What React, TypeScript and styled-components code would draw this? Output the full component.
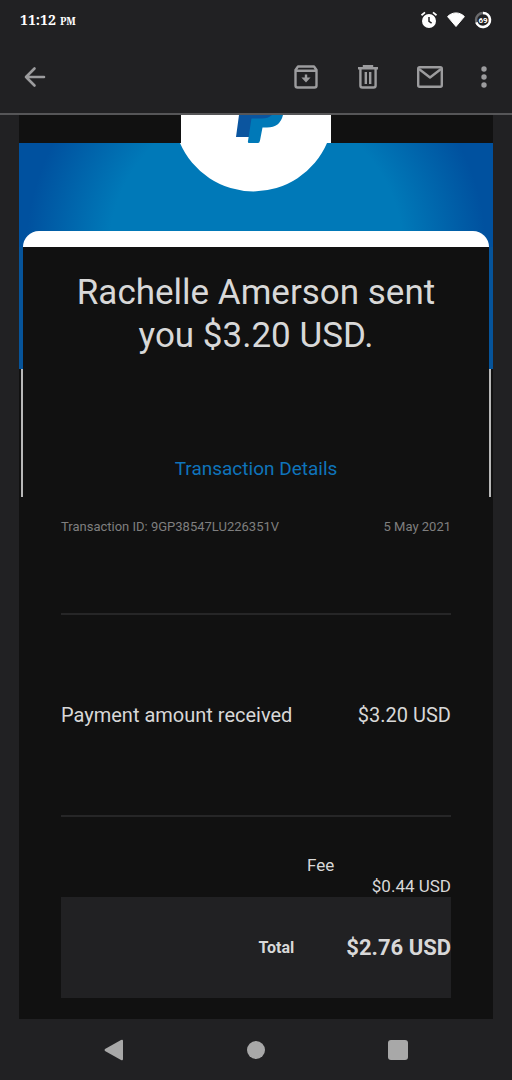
import React from "react";
import styled, { createGlobalStyle, css } from "styled-components";

const GlobalStyle = createGlobalStyle`
  *, *::before, *::after { box-sizing: border-box; }
  body {
    margin: 0;
    background: #212123;
    color: #d8d8d8;
    font-family: Roboto, "Liberation Sans", sans-serif;
  }
`;

const Screen = styled.div`
  display: flex;
  flex-direction: column;
  min-height: 100vh;
`;

const StatusBar = styled.div`
  display: flex;
  align-items: center;
  justify-content: space-between;
  height: 40px;
  padding: 0 20px;
  color: #fff;
`;

const Clock = styled.time`
  display: flex;
  align-items: baseline;
  gap: 4px;
  font: bold 14px/20px "Noto Serif", "Liberation Serif", serif;
`;

const Meridiem = styled.span`
  font-size: 10px;
`;

const StatusIcons = styled.div`
  display: flex;
  align-items: center;
  gap: 9px;
`;

const Toolbar = styled.header`
  display: flex;
  align-items: center;
  justify-content: space-between;
  height: 75px;
  padding: 0 20px 0 19px;
  border-bottom: 2px solid #565658;
`;

const ToolbarGroup = styled.div`
  display: flex;
  align-items: center;
  gap: 30px;
`;

const IconButton = styled.button<{ $narrow?: boolean }>`
  display: flex;
  align-items: center;
  justify-content: center;
  width: ${(p) => (p.$narrow ? "16px" : "32px")};
  height: 32px;
  padding: 0;
  border: 0;
  background: none;
  color: #9c9c9e;
  cursor: pointer;
`;

const Mail = styled.main`
  flex: 1;
  margin: 0 19px;
  background: #111;
`;

const Hero = styled.div`
  display: flex;
  flex-direction: column;
  align-items: center;
  justify-content: space-between;
  height: 132px;
  padding: 0 4px;
  background:
    linear-gradient(#111, #111) top / 100% 28px no-repeat,
    radial-gradient(circle farthest-side at 50% 136px, #0079b8 62%, #00519f 97%);
`;

const CardCap = styled.div`
  align-self: stretch;
  height: 16px;
  border-radius: 16px 16px 0 0;
  background: #fff;
`;

const Edged = styled.div<{ $edge: "blue" | "white" }>`
  ${(p) =>
    p.$edge === "blue"
      ? css`
          min-height: 122px;
          border: solid #06549a;
          border-width: 0 4px;
        `
      : css`
          min-height: 128px;
          margin: 0 2px;
          border: solid #b8b8b8;
          border-width: 0 2px;
        `}
`;

const Headline = styled.h1`
  max-width: 400px;
  margin: 0 auto;
  padding-top: 24px;
  font-size: 35px;
  line-height: 43px;
  font-weight: 400;
  text-align: center;
`;

const SectionTitle = styled.h2`
  margin: 0;
  padding-top: 89px;
  color: #0f74bb;
  font-size: 19px;
  line-height: 22px;
  font-weight: 400;
  text-align: center;
`;

const Details = styled.div`
  padding: 20px 42px;
`;

const MetaRow = styled.div`
  display: flex;
  justify-content: space-between;
  padding-bottom: 76px;
  color: #7f7f7f;
  font-size: 13px;
  line-height: 20px;
`;

const Amounts = styled.table`
  width: 100%;
  border-collapse: collapse;
`;

const PaymentRow = styled.tr`
  height: 202px;
  border: solid #262627;
  border-width: 2px 0;
  font-size: 20px;
  line-height: 24px;
`;

const FeeRow = styled.tr`
  height: 81px;
  font-size: 17px;
  line-height: 21px;
`;

const TotalRow = styled.tr`
  height: 101px;
  background: #212123;
`;

const labelVariants = {
  plain: css`
    text-align: left;
    font-weight: 400;
  `,
  fee: css`
    padding: 38px 12px 0 0;
    text-align: right;
    vertical-align: top;
    font-weight: 400;
  `,
  total: css`
    padding-right: 52px;
    text-align: right;
    font-weight: 700;
  `,
};

const Label = styled.th<{ $variant: keyof typeof labelVariants }>`
  padding: 0;
  ${(p) => labelVariants[p.$variant]}
`;

const Value = styled.td<{ $bottom?: boolean; $strong?: boolean }>`
  width: 1px;
  padding: 0;
  text-align: right;
  white-space: nowrap;
  vertical-align: ${(p) => (p.$bottom ? "bottom" : "middle")};
  font-weight: ${(p) => (p.$strong ? 700 : 400)};
  font-size: ${(p) => (p.$strong ? "22px" : "inherit")};
`;

const NavBar = styled.nav`
  display: flex;
  align-items: center;
  justify-content: space-around;
  height: 61px;
  padding: 0 43px;
`;

function AlarmIcon() {
  return (
    <svg width="18" height="18" viewBox="0 0 18 18" aria-hidden="true">
      <circle cx="9" cy="10" r="7" fill="#fff" />
      <path d="M1.500 4.200 5 1.400M16.500 4.200 13 1.400" stroke="#fff" strokeWidth="1.800" />
      <path d="M9 6v4.400l2.600 1.800" stroke="#212123" strokeWidth="1.500" fill="none" />
    </svg>
  );
}

function WifiIcon() {
  return (
    <svg width="18" height="16" viewBox="0 0 18 16" aria-hidden="true">
      <path d="M.6 4.600C5-.3 13-.3 17.400 4.600L9 14.500Z" fill="#fff" stroke="#fff" strokeLinejoin="round" />
    </svg>
  );
}

function BatteryIcon() {
  return (
    <svg width="18" height="18" viewBox="0 0 18 18" role="img" aria-label="Battery 69%">
      <circle cx="9" cy="9" r="7" fill="none" stroke="#6a6a6c" strokeWidth="2.400" />
      <path d="M9 2a7 7 0 1 1-6.600 9.400" fill="none" stroke="#fff" strokeWidth="2.600" />
      <text x="9" y="12" textAnchor="middle" fontSize="8" fontWeight="700" fill="#fff">69</text>
    </svg>
  );
}

function BackIcon() {
  return (
    <svg width="24" height="24" viewBox="0 0 24 24" fill="none" stroke="currentColor" strokeWidth="2.600" strokeLinecap="round" strokeLinejoin="round">
      <path d="M21 12H3M11.500 3.500 3 12l8.500 8.500" />
    </svg>
  );
}

function ArchiveIcon() {
  return (
    <svg width="24" height="24" viewBox="0 0 24 24" fill="none" stroke="currentColor" strokeWidth="2.400" strokeLinejoin="round">
      <path d="M1.500 5v15.500q0 2 2 2h17q2 0 2-2V5L20 1.500H4ZM1.500 5.800h21M12 9.500v6" />
      <path d="M7.400 12.500h9.200L12 17.600Z" fill="currentColor" stroke="none" />
    </svg>
  );
}

function TrashIcon() {
  return (
    <svg width="24" height="24" viewBox="0 0 24 24" fill="none" stroke="currentColor" strokeWidth="2.400">
      <path d="M2 3.200h20M8 2.500V1.200h8v1.300M4.400 4v16.500q0 2 2 2h11.200q2 0 2-2V4M9.800 7v12M14.200 7v12" />
    </svg>
  );
}

function MailIcon() {
  return (
    <svg width="26" height="22" viewBox="0 0 26 22" fill="none" stroke="currentColor" strokeWidth="2.400" strokeLinejoin="round">
      <rect x="1.200" y="1.200" width="23.600" height="19.600" rx="1.500" />
      <path d="m2 3 11 8.500L24 3" />
    </svg>
  );
}

function MoreIcon() {
  return (
    <svg width="6" height="22" viewBox="0 0 6 22" fill="currentColor">
      <circle cx="3" cy="3" r="2.700" />
      <circle cx="3" cy="11" r="2.700" />
      <circle cx="3" cy="19" r="2.700" />
    </svg>
  );
}

function PayPalBadge() {
  return (
    <svg width="152" height="78" viewBox="0 0 152 78" role="img" aria-label="PayPal">
      <path d="M1 0H151V28H147A80 80 0 0 1 0 28H1Z" fill="#fff" />
      <path d="M59 0h34q-3 6-12 6h-7l-3 16H56Z" fill="#0b559f" />
      <path d="M72 0h31q-3 12.500-16 12.500h-4.500L80 25.500Q79.500 28 78 28H69q-1.500 0-1-2Z" fill="#0079b8" />
      <path d="M71.500 0H92Q88 3.500 82 3.500H71Z" fill="#0b559f" />
    </svg>
  );
}

export default function App() {
  return (
    <>
      <GlobalStyle />
      <Screen>
        <StatusBar>
          <Clock>
            <span>11:12</span>
            <Meridiem>PM</Meridiem>
          </Clock>
          <StatusIcons>
            <AlarmIcon />
            <WifiIcon />
            <BatteryIcon />
          </StatusIcons>
        </StatusBar>
        <Toolbar>
          <IconButton aria-label="Back"><BackIcon /></IconButton>
          <ToolbarGroup>
            <IconButton aria-label="Archive"><ArchiveIcon /></IconButton>
            <IconButton aria-label="Delete"><TrashIcon /></IconButton>
            <IconButton aria-label="Mark as unread"><MailIcon /></IconButton>
            <IconButton aria-label="More options" $narrow><MoreIcon /></IconButton>
          </ToolbarGroup>
        </Toolbar>
        <Mail>
          <Hero>
            <PayPalBadge />
            <CardCap />
          </Hero>
          <Edged $edge="blue">
            <Headline>Rachelle Amerson sent you $3.20 USD.</Headline>
          </Edged>
          <Edged $edge="white">
            <SectionTitle>Transaction Details</SectionTitle>
          </Edged>
          <Details>
            <MetaRow>
              <span>Transaction ID: 9GP38547LU226351V</span>
              <span>5 May 2021</span>
            </MetaRow>
            <Amounts>
              <tbody>
                <PaymentRow>
                  <Label scope="row" $variant="plain">Payment amount received</Label>
                  <Value>$3.20 USD</Value>
                </PaymentRow>
                <FeeRow>
                  <Label scope="row" $variant="fee">Fee</Label>
                  <Value $bottom>$0.44 USD</Value>
                </FeeRow>
                <TotalRow>
                  <Label scope="row" $variant="total">Total</Label>
                  <Value $strong>$2.76 USD</Value>
                </TotalRow>
              </tbody>
            </Amounts>
          </Details>
        </Mail>
        <NavBar>
          <IconButton aria-label="Back">
            <svg width="20" height="22" viewBox="0 0 20 22" fill="#a8a8a8">
              <path d="M1 10 17 1q2-1 2 1v18q0 2-2 1L1 12q-1-1 0-2Z" />
            </svg>
          </IconButton>
          <IconButton aria-label="Home">
            <svg width="18" height="18" viewBox="0 0 18 18" fill="#a8a8a8">
              <circle cx="9" cy="9" r="9" />
            </svg>
          </IconButton>
          <IconButton aria-label="Recent apps">
            <svg width="20" height="20" viewBox="0 0 20 20" fill="#a8a8a8">
              <rect width="20" height="20" rx="3" />
            </svg>
          </IconButton>
        </NavBar>
      </Screen>
    </>
  );
}
